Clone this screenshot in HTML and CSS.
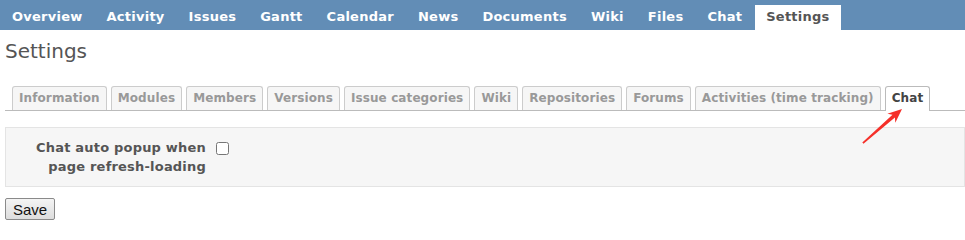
FILE: index.html
```html
<!DOCTYPE html>
<html lang="en">
<head>
  <meta charset="UTF-8">
  <title>Settings - Project</title>
  <link rel="stylesheet" href="styles.css">
</head>
<body>
  <div class="main-menu">
    <a href="#">Overview</a>
    <a href="#">Activity</a>
    <a href="#">Issues</a>
    <a href="#">Gantt</a>
    <a href="#">Calendar</a>
    <a href="#">News</a>
    <a href="#">Documents</a>
    <a href="#">Wiki</a>
    <a href="#">Files</a>
    <a href="#">Chat</a>
    <a href="#" class="selected">Settings</a>
  </div>

  <div class="content">
    <h2>Settings</h2>

    <div class="tabs">
      <a href="#">Information</a>
      <a href="#">Modules</a>
      <a href="#">Members</a>
      <a href="#">Versions</a>
      <a href="#">Issue categories</a>
      <a href="#">Wiki</a>
      <a href="#">Repositories</a>
      <a href="#">Forums</a>
      <a href="#">Activities (time tracking)</a>
      <a href="#" class="selected">Chat</a>

      <!-- annotation arrow pointing at the Chat tab -->
      <svg class="arrow" width="60" height="50" viewBox="0 0 60 50">
        <polygon fill="#f5302a" points="47,9 40.3,22.7 39.9,17.6 8.5,43.8 7.3,42.4 37.5,14.8 32.4,13.7"/>
      </svg>
    </div>

    <div class="box">
      <div class="setting-row">
        <label class="setting-label" for="chat_popup">Chat auto popup when page refresh-loading</label>
        <input type="checkbox" id="chat_popup">
      </div>
    </div>

    <button class="save-btn">Save</button>
  </div>
</body>
</html>
```

FILE: styles.css
```css
* {
  box-sizing: border-box;
}

body {
  margin: 0;
  font-family: 'DejaVu Sans', Verdana, sans-serif;
  color: #333;
  background: white;
}

.main-menu {
  background-color: #628DB6;
  height: 30px;
  display: flex;
  align-items: flex-end;
  padding-left: 1px;
}

.main-menu a {
  color: white;
  font-size: 13px;
  font-weight: bold;
  letter-spacing: 0.25px;
  text-decoration: none;
  padding: 4px 11px 6px;
  margin-right: 2px;
}

.main-menu a.selected {
  background-color: white;
  color: #555;
}

.content {
  padding-left: 5px;
}

h2 {
  margin: 9px 0 22px;
  font-size: 20px;
  font-weight: normal;
  color: #555;
}

.tabs {
  position: relative;
  display: flex;
  align-items: flex-end;
  border-bottom: 1px solid #bbb;
  padding-left: 7px;
  height: 26px;
}

.tabs a {
  font-size: 12px;
  font-weight: bold;
  letter-spacing: 0.1px;
  color: #999;
  text-decoration: none;
  background-color: #f6f6f6;
  border: 1px solid #ccc;
  border-bottom: none;
  border-radius: 3px 3px 0 0;
  padding: 4px 6px 5px;
  margin-right: 4px;
}

.tabs a.selected {
  background-color: white;
  color: #444;
  border-color: #bbb;
  margin-bottom: -1px;
  padding-bottom: 6px;
}

.arrow {
  position: absolute;
  left: 850px;
  top: 15px;
}

.box {
  margin-top: 16px;
  background-color: #f6f6f6;
  border: 1px solid #e4e4e4;
  padding: 10px 0 9px;
  height: 60px;
}

.setting-row {
  display: flex;
  align-items: flex-start;
}

.setting-label {
  width: 200px;
  text-align: right;
  font-size: 13px;
  font-weight: bold;
  letter-spacing: 0.2px;
  color: #555;
  line-height: 19px;
}

.setting-row input {
  margin: 4px 0 0 10px;
  width: 13px;
  height: 13px;
}

.save-btn {
  margin-top: 11px;
  font-family: 'Liberation Sans', Arial, sans-serif;
  font-size: 15px;
  color: #111;
  width: 50px;
  height: 22px;
  padding: 0;
  background: linear-gradient(#f4f4f4, #dddddd);
  border: 1px solid #8a8a8a;
  border-radius: 2px;
}
```
